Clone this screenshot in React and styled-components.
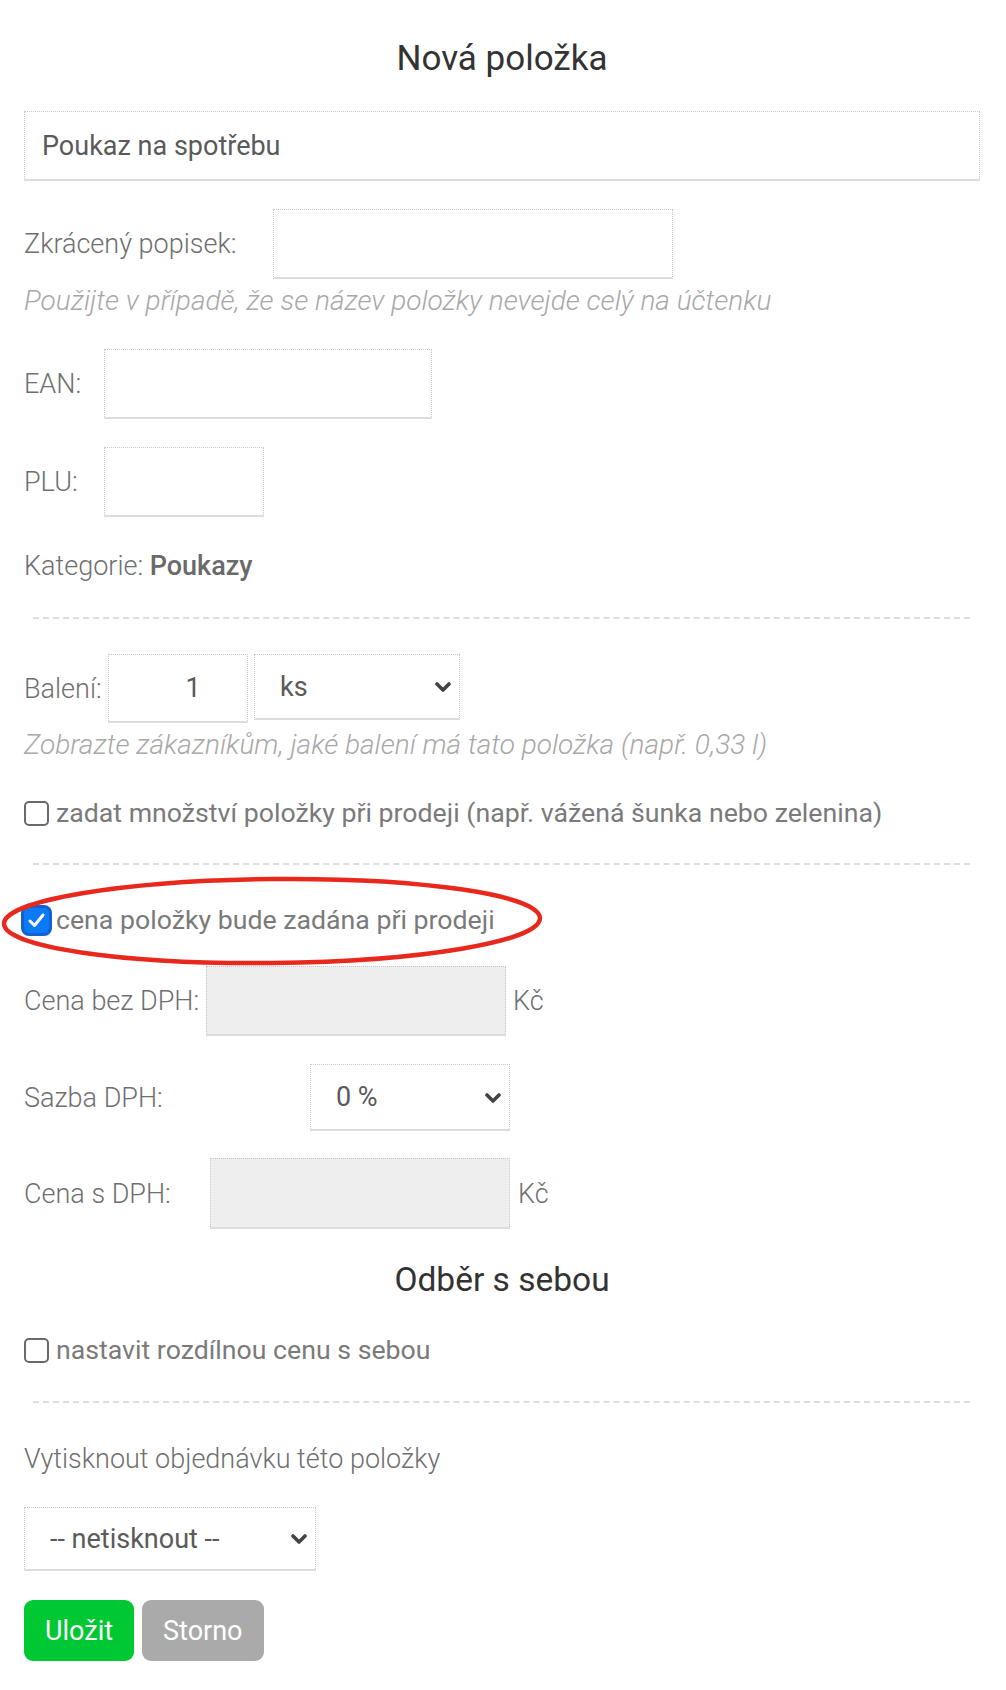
import React from "react";
import styled, { createGlobalStyle } from "styled-components";

const Global = createGlobalStyle`
  html, body { margin: 0; padding: 0; background: #fff; }
  body { font-family: Roboto, "Liberation Sans", Arial, sans-serif; color: #777; }
  * { box-sizing: border-box; }
`;

const Page = styled.main`
  width: 1006px;
  padding: 0 26px 31px 24px;
  display: flex;
  flex-direction: column;
  align-items: stretch;
`;

const Heading = styled.h1`
  margin: ${(p) => p.$mt}px 0 0;
  font-size: ${(p) => p.$size || 35}px;
  line-height: 40px;
  font-weight: 400;
  color: #333;
  text-align: center;
`;

const TextInput = styled.input`
  flex: none;
  width: ${(p) => (p.$w ? `${p.$w}px` : "100%")};
  height: ${(p) => p.$h || 70}px;
  margin-top: ${(p) => p.$mt || 0}px;
  padding: 0 ${(p) => p.$pr || 17}px 0 ${(p) => p.$pl || 17}px;
  border: 1px dotted #c8c8c8;
  border-bottom: 2px solid #dcdcdc;
  border-radius: 0;
  background: ${(p) => (p.disabled ? "#eeeeee" : "#fff")};
  font-family: inherit;
  font-size: 27px;
  font-weight: 400;
  color: #5a5a5a;
  text-align: ${(p) => p.$align || "left"};
  outline: none;
`;

const Row = styled.div`
  display: flex;
  align-items: center;
  margin-top: ${(p) => p.$mt}px;
`;

const Label = styled.label`
  flex: 0 0 ${(p) => p.$w}px;
  font-size: 27px;
  line-height: 30px;
  font-weight: 300;
  color: #6f6f6f;
  white-space: nowrap;
`;

const Unit = styled.span`
  margin-left: ${(p) => p.$ml}px;
  font-size: 27px;
  font-weight: 300;
  color: #6f6f6f;
`;

const Hint = styled.p`
  margin: ${(p) => p.$mt}px 0 0;
  font-size: 28px;
  line-height: 30px;
  font-style: italic;
  font-weight: 300;
  color: #a8a8a8;
  white-space: nowrap;
`;

const Text = styled.p`
  margin: ${(p) => p.$mt}px 0 0;
  font-size: 27px;
  line-height: 30px;
  font-weight: 300;
  color: #6f6f6f;
`;

const Strong = styled.strong`
  font-weight: 500;
  color: #6a6a6a;
`;

const Divider = styled.hr`
  margin: ${(p) => p.$mt}px 10px 0 9px;
  border: 0;
  border-top: 2px dashed #dedede;
  height: 0;
`;

const CheckRow = styled.label`
  display: flex;
  align-items: center;
  gap: 7px;
  margin-top: ${(p) => p.$mt || 0}px;
  font-size: 26.7px;
  line-height: 30px;
  font-weight: 400;
  color: #7a7a7a;
  white-space: nowrap;
`;

const Box = styled.span`
  flex: 0 0 auto;
  width: 25px;
  height: 25px;
  border-radius: 5px;
  display: inline-flex;
  align-items: center;
  justify-content: center;
  border: ${(p) => (p.$checked ? "none" : "2px solid #6a6a6a")};
  background: ${(p) => (p.$checked ? "#0a7af5" : "#fff")};
  box-shadow: ${(p) => (p.$checked ? "0 0 0 3px #1460d2" : "none")};
`;

const Highlight = styled.div`
  position: relative;
  margin-top: ${(p) => p.$mt}px;
`;

const Ellipse = styled.svg`
  position: absolute;
  left: -24px;
  top: -30px;
  width: 548px;
  height: 92px;
  pointer-events: none;
  overflow: visible;
`;

const SelectWrap = styled.div`
  position: relative;
  flex: none;
  align-self: flex-start;
  width: ${(p) => p.$w}px;
  margin-left: ${(p) => p.$ml || 0}px;
  margin-top: ${(p) => p.$mt || 0}px;
`;

const Select = styled.select`
  display: block;
  appearance: none;
  -webkit-appearance: none;
  width: 100%;
  height: ${(p) => p.$h || 67}px;
  padding: 0 30px 0 25px;
  border: 1px dotted #c8c8c8;
  border-bottom: 2px solid #dcdcdc;
  border-radius: 0;
  background: #fff;
  font-family: inherit;
  font-size: 27px;
  font-weight: 400;
  color: #5a5a5a;
  outline: none;
`;

const Chevron = styled.svg`
  position: absolute;
  right: 9px;
  top: 50%;
  width: 16px;
  height: 11px;
  margin-top: -5px;
  pointer-events: none;
`;

const Buttons = styled.div`
  display: flex;
  gap: 8px;
  margin-top: 29px;
`;

const Button = styled.button`
  height: 61px;
  padding: 0 21px;
  border: 0;
  border-radius: 9px;
  background: ${(p) => (p.$variant === "primary" ? "#00c832" : "#aaaaaa")};
  color: #fff;
  font-family: inherit;
  font-size: 27px;
  font-weight: 400;
  cursor: pointer;
`;

const ChevronIcon = () => (
  <Chevron viewBox="0 0 16 11">
    <path d="M2 2 L8 8 L14 2" fill="none" stroke="#444" strokeWidth="3.6" strokeLinecap="round" strokeLinejoin="round" />
  </Chevron>
);

const SelectField = ({ w, ml, mt, h, value }) => (
  <SelectWrap $w={w} $ml={ml} $mt={mt}>
    <Select $h={h} defaultValue={value}>
      <option value={value}>{value}</option>
    </Select>
    <ChevronIcon />
  </SelectWrap>
);

const Check = ({ checked, children, mt }) => (
  <CheckRow $mt={mt}>
    <Box $checked={checked}>
      {checked && (
        <svg width="19" height="17" viewBox="0 0 19 17">
          <path d="M3 9 L7.5 13.5 L16 3" fill="none" stroke="#fff" strokeWidth="3" strokeLinecap="round" strokeLinejoin="round" />
        </svg>
      )}
    </Box>
    {children}
  </CheckRow>
);

export default function App() {
  return (
    <>
      <Global />
      <Page>
        <Heading $mt={39}>Nová položka</Heading>
        <TextInput $mt={32} defaultValue="Poukaz na spotřebu" />

        <Row $mt={28}>
          <Label $w={249}>Zkrácený popisek:</Label>
          <TextInput $w={400} />
        </Row>
        <Hint $mt={7}>Použijte v případě, že se název položky nevejde celý na účtenku</Hint>

        <Row $mt={33}>
          <Label $w={80}>EAN:</Label>
          <TextInput $w={328} />
        </Row>
        <Row $mt={28}>
          <Label $w={80}>PLU:</Label>
          <TextInput $w={160} />
        </Row>

        <Text $mt={34}>
          Kategorie: <Strong>Poukazy</Strong>
        </Text>

        <Divider $mt={36} />

        <Row $mt={35}>
          <Label $w={84}>Balení:</Label>
          <TextInput $w={140} $h={69} $align="center" $pl={34} $pr={4} defaultValue="1" />
          <SelectField w={206} ml={6} h={66} value="ks" />
        </Row>
        <Hint $mt={7}>Zobrazte zákazníkům, jaké balení má tato položka (např. 0,33 l)</Hint>

        <Check mt={38}>zadat množství položky při prodeji (např. vážená šunka nebo zelenina)</Check>

        <Divider $mt={35} />

        <Highlight $mt={40}>
          <Check checked>cena položky bude zadána při prodeji</Check>
          <Ellipse viewBox="0 0 548 92">
            <ellipse cx="272" cy="46" rx="268" ry="42" fill="none" stroke="#e8281d" strokeWidth="4.5" transform="rotate(-0.6 272 46)" />
          </Ellipse>
        </Highlight>

        <Row $mt={31}>
          <Label $w={182}>Cena bez DPH:</Label>
          <TextInput $w={300} disabled />
          <Unit $ml={7}>Kč</Unit>
        </Row>
        <Row $mt={28}>
          <Label $w={286}>Sazba DPH:</Label>
          <SelectField w={200} h={67} value="0 %" />
        </Row>
        <Row $mt={27}>
          <Label $w={186}>Cena s DPH:</Label>
          <TextInput $w={300} $h={71} disabled />
          <Unit $ml={8}>Kč</Unit>
        </Row>

        <Heading $mt={31} $size={33.5}>Odběr s sebou</Heading>

        <Check mt={35}>nastavit rozdílnou cenu s sebou</Check>

        <Divider $mt={36} />

        <Text $mt={41}>Vytisknout objednávku této položky</Text>

        <SelectField w={292} mt={33} h={64} value="-- netisknout --" />

        <Buttons>
          <Button $variant="primary">Uložit</Button>
          <Button>Storno</Button>
        </Buttons>
      </Page>
    </>
  );
}
